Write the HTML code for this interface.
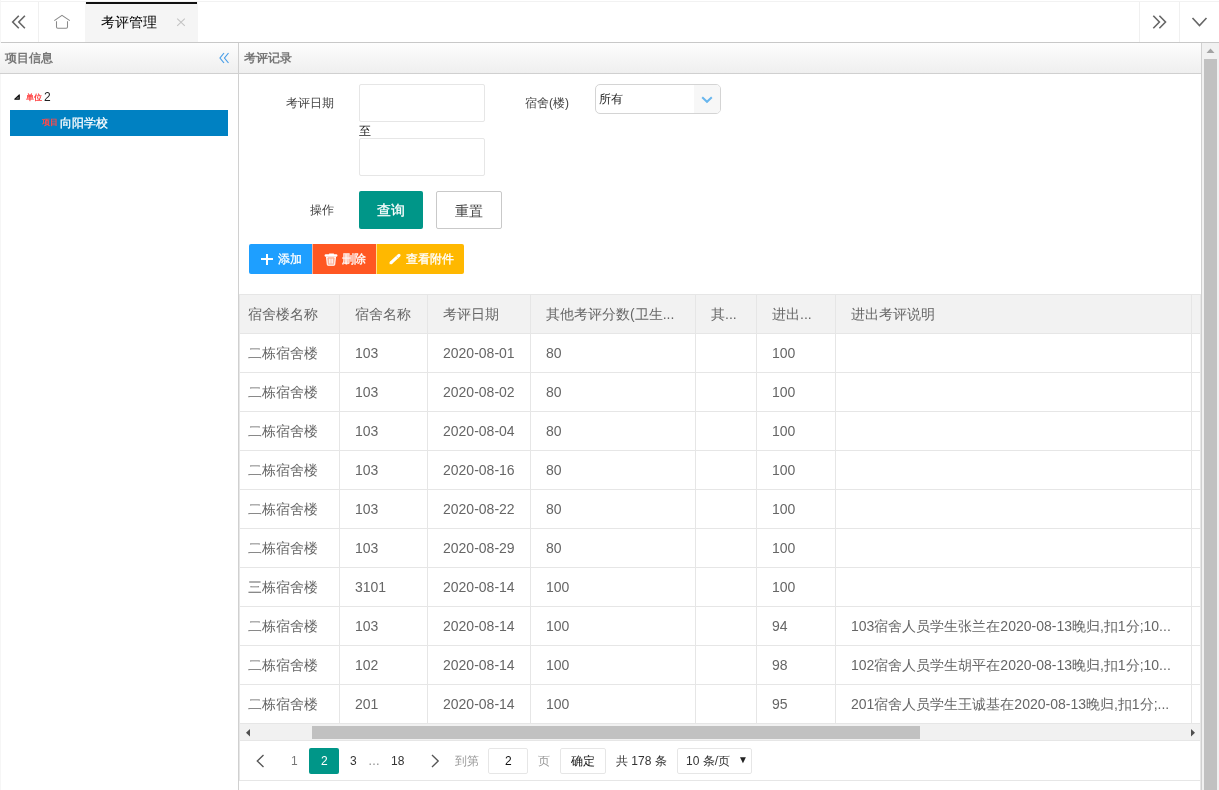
<!DOCTYPE html>
<html><head><meta charset="utf-8">
<style>
*{box-sizing:border-box;margin:0;padding:0}
html,body{width:1219px;height:790px;overflow:hidden;background:#fff;font-family:"Liberation Sans",sans-serif;color:#333}
.a{position:absolute}
.t{position:absolute;white-space:nowrap;line-height:1;will-change:transform}
.tc{will-change:transform;left:0;width:0;font-size:14px;color:#666;white-space:nowrap}
.tc span,.pg span{white-space:nowrap}
.pg{will-change:transform;left:0;width:0;font-size:12px;white-space:nowrap}
</style></head><body>
<!-- top tab bar -->
<div class="a" style="left:0;top:1px;width:1219px;height:1px;background:#f2f2f2"></div>
<div class="a" style="left:0;top:42px;width:1219px;height:1px;background:#c8c8c8"></div>
<div class="a" style="left:38px;top:2px;width:1px;height:40px;background:#f0f0f0"></div>
<div class="a" style="left:85px;top:2px;width:113px;height:40px;background:#f5f5f5"></div>
<div class="a" style="left:86px;top:2px;width:111px;height:2px;background:#111"></div>
<div class="a" style="left:1139px;top:2px;width:1px;height:40px;background:#f0f0f0"></div>
<div class="a" style="left:1179px;top:2px;width:1px;height:40px;background:#f0f0f0"></div>
<svg class="a" style="left:0;top:0" width="1219" height="42">
 <g fill="none" stroke="#666" stroke-width="1.6">
  <path d="M18.8 15.7 L12.7 22 L18.8 28.2 M24.9 15.7 L18.8 22 L24.9 28.2"/>
  <path d="M1153.3 15.7 L1159.4 22 L1153.3 28.2 M1159.4 15.7 L1165.5 22 L1159.4 28.2"/>
  <path d="M1192.5 18 L1199.5 25.5 L1206.5 18"/>
 </g>
 <g fill="none" stroke="#8a8a8a" stroke-width="1.05">
  <path d="M54.3 20.6 L62 15.3 L69.8 20.6"/>
  <path d="M56.5 21.2 V27 Q56.5 28.3 57.8 28.3 H66.2 Q67.5 28.3 67.5 27 V21.2"/>
 </g>
 <g fill="none" stroke="#c4c4c4" stroke-width="1.1"><path d="M177.2 18.6 L184.8 25.8 M184.8 18.6 L177.2 25.8"/></g>
</svg>
<div class="t" style="left:101px;top:15px;font-size:14px;color:#000">考评管理</div>

<div class="a" style="left:0;top:0;width:1px;height:790px;background:#f6f6f6"></div>
<!-- west panel header -->
<div class="a" style="left:0;top:43px;width:238px;height:30px;background:linear-gradient(#fdfdfd,#efefef)"></div>
<div class="a" style="left:239px;top:43px;width:962px;height:30px;background:linear-gradient(#fdfdfd,#efefef)"></div>
<div class="a" style="left:0;top:73px;width:1201px;height:1px;background:#d0d0d0"></div>
<div class="a" style="left:238px;top:43px;width:1px;height:747px;background:#d0d0d0"></div>
<div class="a" style="left:1201px;top:43px;width:1px;height:747px;background:#d0d0d0"></div>
<div class="t" style="left:5px;top:52px;font-size:12px;font-weight:bold;color:#777">项目信息</div>
<div class="t" style="left:244px;top:52px;font-size:12px;font-weight:bold;color:#777">考评记录</div>
<svg class="a" style="left:218px;top:50px" width="14" height="16"><g fill="none" stroke="#4a9fe8" stroke-width="1.2"><path d="M6 3 L2 8 L6 13 M10.5 3 L6.5 8 L10.5 13"/></g></svg>
<!-- tree -->
<svg class="a" style="left:13px;top:92px" width="10" height="10"><path d="M6.3 2.8 L6.3 7.2 L1.8 7.2 Z" fill="#666" stroke="#111" stroke-width="1.1" stroke-linejoin="round"/></svg>
<div class="t" style="left:26px;top:94px;font-size:8px;color:#f33;font-weight:bold">单位</div>
<div class="t" style="left:44px;top:91px;font-size:12px;color:#222">2</div>
<div class="a" style="left:10px;top:110px;width:218px;height:26px;background:#0081c2"></div>
<div class="t" style="left:42px;top:119px;font-size:8px;color:#ff4a4a;font-weight:bold">项目</div>
<div class="t" style="left:60px;top:117px;font-size:12px;color:#fff;-webkit-text-stroke:0.25px #fff">向阳学校</div>
<!-- page scrollbar -->
<div class="a" style="left:1202px;top:43px;width:17px;height:747px;background:#f1f1f1"></div>
<div class="a" style="left:1204px;top:59px;width:13px;height:731px;background:#c1c1c1"></div>
<svg class="a" style="left:1202px;top:43px" width="17" height="14"><path d="M4.5 10 L8.5 5.5 L12.5 10 Z" fill="#a3a3a3"/></svg>
<!-- form -->
<div class="t" style="left:286px;top:97px;font-size:12px;color:#444">考评日期</div>
<div class="a" style="left:359px;top:84px;width:126px;height:38px;border:1px solid #e6e6e6;border-radius:2px"></div>
<div class="t" style="left:359px;top:125px;font-size:12px;color:#1a1a1a">至</div>
<div class="a" style="left:359px;top:138px;width:126px;height:38px;border:1px solid #e6e6e6;border-radius:2px"></div>
<div class="t" style="left:525px;top:97px;font-size:12px;color:#444">宿舍(楼)</div>
<div class="a" style="left:595px;top:84px;width:126px;height:30px;border:1px solid #d4d4d4;border-radius:5px;overflow:hidden">
  <div class="a" style="right:0;top:0;width:26px;height:28px;background:#f7f7f7"></div>
  <svg class="a" style="right:5px;top:8px" width="16" height="12"><path d="M3.2 4.2 L8 8.8 L12.8 4.2" fill="none" stroke="#68b6ee" stroke-width="2"/></svg>
</div>
<div class="t" style="left:599px;top:93px;font-size:12px;color:#222">所有</div>
<div class="t" style="left:310px;top:204px;font-size:12px;color:#444">操作</div>
<div class="a" style="left:359px;top:191px;width:64px;height:38px;background:#009688;border-radius:2px"></div>
<div class="t" style="left:377px;top:203px;font-size:14px;color:#fff;-webkit-text-stroke:0.3px #fff">查询</div>
<div class="a" style="left:436px;top:191px;width:66px;height:38px;border:1px solid #c9c9c9;border-radius:2px"></div>
<div class="t" style="left:455px;top:204px;font-size:14px;color:#444">重置</div>
<!-- toolbar -->
<div class="a" style="left:249px;top:244px;width:63px;height:30px;background:#1e9fff;border-radius:2px 0 0 2px"></div>
<div class="a" style="left:312px;top:244px;width:64px;height:30px;background:#ff5722;border-left:1px solid #ffb090"></div>
<div class="a" style="left:376px;top:244px;width:88px;height:30px;background:#ffb800;border-left:1px solid #ffe08a;border-radius:0 2px 2px 0"></div>
<svg class="a" style="left:249px;top:244px" width="215" height="30">
 <path d="M12 15.1 H24 M18 10 V21" stroke="#fff" stroke-width="2"/>
 <path d="M76.8 11.5 H87.2" stroke="#fff" stroke-width="2.4" stroke-linecap="round"/>
 <path d="M80.5 10.2 H84.5" stroke="#fff" stroke-width="1.4" stroke-linecap="round"/>
 <path d="M77.6 13.2 L78.3 20.4 Q78.5 21.2 79.3 21.2 H84.7 Q85.5 21.2 85.7 20.4 L86.4 13.2 Z" fill="rgba(255,255,255,0.55)" stroke="#fff" stroke-width="1.1"/>
 <path d="M80.6 14.5 V19.5 M82 14.5 V19.5 M83.4 14.5 V19.5" stroke="#fff" stroke-width="0.8"/>
 <path d="M79 13.8 H85" stroke="#ffa27d" stroke-width="0.8"/>
 <path d="M142.2 18.6 L150 11.3" stroke="#fff" stroke-width="3.1" stroke-linecap="round"/>
 <path d="M140.5 20.3 L141.2 17.3 L143.6 19.6 Z" fill="#fff"/>
 <path d="M147.6 12.4 L149.6 14.4" stroke="#ffd46a" stroke-width="0.7"/>
</svg>
<div class="t" style="left:278px;top:253px;font-size:12px;color:#fff;-webkit-text-stroke:0.3px #fff">添加</div>
<div class="t" style="left:342px;top:253px;font-size:12px;color:#fff;-webkit-text-stroke:0.3px #fff">删除</div>
<div class="t" style="left:406px;top:253px;font-size:12px;color:#fff;-webkit-text-stroke:0.3px #fff">查看附件</div>
<!-- table -->
<div class="a" style="left:239px;top:295px;width:961px;height:38px;background:#f2f2f2"></div>
<div class="a" style="left:239px;top:294px;width:962px;height:1px;background:#e6e6e6"></div>
<div class="a" style="left:239px;top:333px;width:962px;height:1px;background:#e6e6e6"></div>
<div class="a" style="left:239px;top:372px;width:962px;height:1px;background:#e6e6e6"></div>
<div class="a" style="left:239px;top:411px;width:962px;height:1px;background:#e6e6e6"></div>
<div class="a" style="left:239px;top:450px;width:962px;height:1px;background:#e6e6e6"></div>
<div class="a" style="left:239px;top:489px;width:962px;height:1px;background:#e6e6e6"></div>
<div class="a" style="left:239px;top:528px;width:962px;height:1px;background:#e6e6e6"></div>
<div class="a" style="left:239px;top:567px;width:962px;height:1px;background:#e6e6e6"></div>
<div class="a" style="left:239px;top:606px;width:962px;height:1px;background:#e6e6e6"></div>
<div class="a" style="left:239px;top:645px;width:962px;height:1px;background:#e6e6e6"></div>
<div class="a" style="left:239px;top:684px;width:962px;height:1px;background:#e6e6e6"></div>
<div class="a" style="left:239px;top:723px;width:962px;height:1px;background:#e6e6e6"></div>
<div class="a" style="left:239px;top:294px;width:1px;height:487px;background:#e6e6e6"></div>
<div class="a" style="left:339px;top:294px;width:1px;height:430px;background:#e6e6e6"></div>
<div class="a" style="left:427px;top:294px;width:1px;height:430px;background:#e6e6e6"></div>
<div class="a" style="left:530px;top:294px;width:1px;height:430px;background:#e6e6e6"></div>
<div class="a" style="left:695px;top:294px;width:1px;height:430px;background:#e6e6e6"></div>
<div class="a" style="left:756px;top:294px;width:1px;height:430px;background:#e6e6e6"></div>
<div class="a" style="left:835px;top:294px;width:1px;height:430px;background:#e6e6e6"></div>
<div class="a" style="left:1191px;top:294px;width:1px;height:430px;background:#e6e6e6"></div>
<div class="a" style="left:1200px;top:294px;width:1px;height:496px;background:#e6e6e6"></div>
<div class="a tc" style="top:295px;height:38px;line-height:38px">
<span class="a" style="left:248px;top:0">宿舍楼名称</span>
<span class="a" style="left:355px;top:0">宿舍名称</span>
<span class="a" style="left:443px;top:0">考评日期</span>
<span class="a" style="left:546px;top:0">其他考评分数(卫生...</span>
<span class="a" style="left:711px;top:0">其...</span>
<span class="a" style="left:772px;top:0">进出...</span>
<span class="a" style="left:851px;top:0">进出考评说明</span>
</div>
<div class="a tc" style="top:334px;height:38px;line-height:38px">
<span class="a" style="left:248px;top:0">二栋宿舍楼</span>
<span class="a" style="left:355px;top:0">103</span>
<span class="a" style="left:443px;top:0">2020-08-01</span>
<span class="a" style="left:546px;top:0">80</span>
<span class="a" style="left:772px;top:0">100</span>
</div>
<div class="a tc" style="top:373px;height:38px;line-height:38px">
<span class="a" style="left:248px;top:0">二栋宿舍楼</span>
<span class="a" style="left:355px;top:0">103</span>
<span class="a" style="left:443px;top:0">2020-08-02</span>
<span class="a" style="left:546px;top:0">80</span>
<span class="a" style="left:772px;top:0">100</span>
</div>
<div class="a tc" style="top:412px;height:38px;line-height:38px">
<span class="a" style="left:248px;top:0">二栋宿舍楼</span>
<span class="a" style="left:355px;top:0">103</span>
<span class="a" style="left:443px;top:0">2020-08-04</span>
<span class="a" style="left:546px;top:0">80</span>
<span class="a" style="left:772px;top:0">100</span>
</div>
<div class="a tc" style="top:451px;height:38px;line-height:38px">
<span class="a" style="left:248px;top:0">二栋宿舍楼</span>
<span class="a" style="left:355px;top:0">103</span>
<span class="a" style="left:443px;top:0">2020-08-16</span>
<span class="a" style="left:546px;top:0">80</span>
<span class="a" style="left:772px;top:0">100</span>
</div>
<div class="a tc" style="top:490px;height:38px;line-height:38px">
<span class="a" style="left:248px;top:0">二栋宿舍楼</span>
<span class="a" style="left:355px;top:0">103</span>
<span class="a" style="left:443px;top:0">2020-08-22</span>
<span class="a" style="left:546px;top:0">80</span>
<span class="a" style="left:772px;top:0">100</span>
</div>
<div class="a tc" style="top:529px;height:38px;line-height:38px">
<span class="a" style="left:248px;top:0">二栋宿舍楼</span>
<span class="a" style="left:355px;top:0">103</span>
<span class="a" style="left:443px;top:0">2020-08-29</span>
<span class="a" style="left:546px;top:0">80</span>
<span class="a" style="left:772px;top:0">100</span>
</div>
<div class="a tc" style="top:568px;height:38px;line-height:38px">
<span class="a" style="left:248px;top:0">三栋宿舍楼</span>
<span class="a" style="left:355px;top:0">3101</span>
<span class="a" style="left:443px;top:0">2020-08-14</span>
<span class="a" style="left:546px;top:0">100</span>
<span class="a" style="left:772px;top:0">100</span>
</div>
<div class="a tc" style="top:607px;height:38px;line-height:38px">
<span class="a" style="left:248px;top:0">二栋宿舍楼</span>
<span class="a" style="left:355px;top:0">103</span>
<span class="a" style="left:443px;top:0">2020-08-14</span>
<span class="a" style="left:546px;top:0">100</span>
<span class="a" style="left:772px;top:0">94</span>
<span class="a" style="left:851px;top:0">103宿舍人员学生张兰在2020-08-13晚归,扣1分;10...</span>
</div>
<div class="a tc" style="top:646px;height:38px;line-height:38px">
<span class="a" style="left:248px;top:0">二栋宿舍楼</span>
<span class="a" style="left:355px;top:0">102</span>
<span class="a" style="left:443px;top:0">2020-08-14</span>
<span class="a" style="left:546px;top:0">100</span>
<span class="a" style="left:772px;top:0">98</span>
<span class="a" style="left:851px;top:0">102宿舍人员学生胡平在2020-08-13晚归,扣1分;10...</span>
</div>
<div class="a tc" style="top:685px;height:38px;line-height:38px">
<span class="a" style="left:248px;top:0">二栋宿舍楼</span>
<span class="a" style="left:355px;top:0">201</span>
<span class="a" style="left:443px;top:0">2020-08-14</span>
<span class="a" style="left:546px;top:0">100</span>
<span class="a" style="left:772px;top:0">95</span>
<span class="a" style="left:851px;top:0">201宿舍人员学生王诚基在2020-08-13晚归,扣1分;...</span>
</div>
<div class="a" style="left:240px;top:724px;width:960px;height:16px;background:#f1f1f1"></div>
<div class="a" style="left:239px;top:740px;width:962px;height:1px;background:#e6e6e6"></div>
<div class="a" style="left:312px;top:726px;width:608px;height:13px;background:#c1c1c1"></div>
<svg class="a" style="left:239px;top:724px" width="962" height="16"><path d="M7 8.7 L11 5 L11 12.4 Z M952 5 L956 8.7 L952 12.4 Z" fill="#505050"/></svg>
<div class="a" style="left:239px;top:780px;width:962px;height:1px;background:#e6e6e6"></div>
<svg class="a" style="left:250px;top:750px" width="200" height="22"><path d="M13.5 5 L7.3 11 L13.5 17 M182 5 L188.2 11 L182 17" fill="none" stroke="#555" stroke-width="1.35"/></svg>
<div class="a" style="left:309px;top:748px;width:30px;height:26px;background:#009688;border-radius:2px"></div>
<div class="a pg" style="top:748px;height:26px;line-height:26px">
<span class="a" style="left:291px;color:#777">1</span>
<span class="a" style="left:321px;color:#fff">2</span>
<span class="a" style="left:350px;color:#333">3</span>
<span class="a" style="left:368px;color:#888">…</span>
<span class="a" style="left:391px;color:#333">18</span>
<span class="a" style="left:455px;color:#999">到第</span>
<span class="a" style="left:538px;color:#999">页</span>
<span class="a" style="left:616px;color:#333">共 178 条</span>
</div>
<div class="a" style="left:488px;top:748px;width:40px;height:26px;border:1px solid #e6e6e6;border-radius:2px"></div>
<div class="a" style="left:560px;top:748px;width:46px;height:26px;border:1px solid #e6e6e6;border-radius:2px"></div>
<div class="a" style="left:677px;top:748px;width:75px;height:26px;border:1px solid #e6e6e6;border-radius:2px"></div>
<div class="a pg" style="top:748px;height:26px;line-height:26px">
<span class="a" style="left:505px;color:#111">2</span>
<span class="a" style="left:571px;color:#111">确定</span>
<span class="a" style="left:686px;color:#333">10 条/页</span>
<span class="a" style="left:738px;top:-1px;color:#222;font-size:10px">▼</span>
</div>
</body></html>
